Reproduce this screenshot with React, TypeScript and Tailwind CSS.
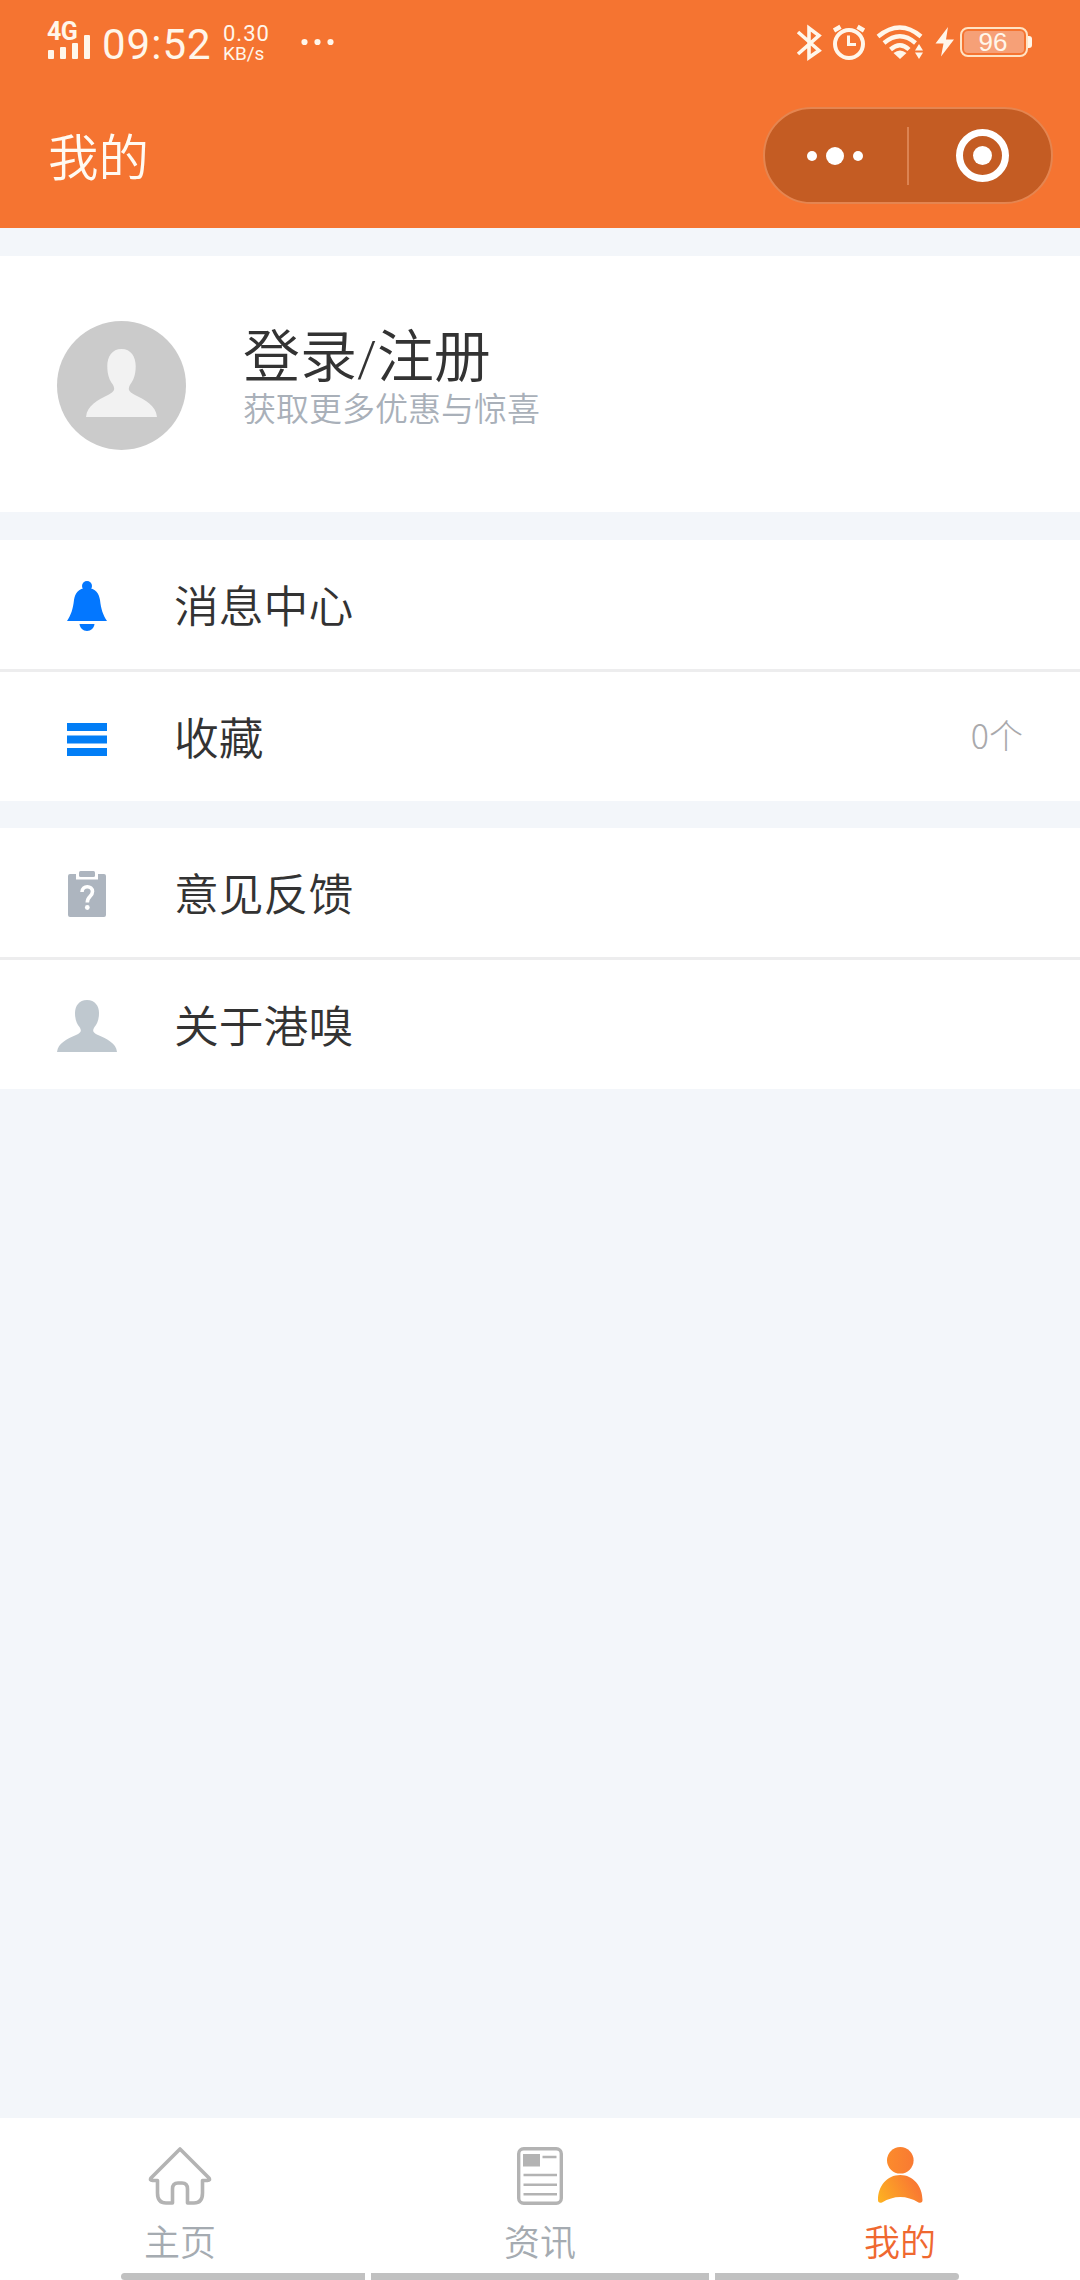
import React from "react";

interface MenuRowProps {
  icon: React.ReactNode;
  label: string;
  value?: string;
  divided?: boolean;
}

interface TabProps {
  icon: React.ReactNode;
  label: string;
  active?: boolean;
}

const StatusBar: React.FC = () => (
  <div className="flex h-[84px] items-start font-[Roboto,sans-serif] text-[#fff6ea]">
    <div className="ml-[47px] mt-[22px] w-[44px]">
      <div className="h-[20px] whitespace-nowrap text-[25px] font-bold leading-[20px] tracking-[-0.5px]">4G</div>
      <svg width="44" height="26" viewBox="0 0 44 26" fill="currentColor" className="-mt-[10px] overflow-visible">
        <rect x="1" y="18" width="6" height="9" rx="1" />
        <rect x="13" y="15" width="6" height="12" rx="1" />
        <rect x="25" y="11" width="6" height="16" rx="1" />
        <rect x="37" y="3" width="6" height="24" rx="1" />
      </svg>
    </div>
    <div className="ml-[11px] mt-[20px] w-[109px] whitespace-nowrap text-[42px] leading-[50px] tracking-[1px]">09:52</div>
    <div className="ml-[12px] mt-[22px] w-[50px]">
      <div className="h-[23px] text-[22px] leading-[23px] tracking-[1px]">0.30</div>
      <div className="h-[17px] text-[19px] leading-[17px]">KB/s</div>
    </div>
    <svg width="34" height="8" viewBox="0 0 34 8" fill="currentColor" className="ml-[27px] mt-[38px]">
      <circle cx="4.5" cy="4" r="3.1" />
      <circle cx="17.5" cy="4" r="3.1" />
      <circle cx="30.5" cy="4" r="3.1" />
    </svg>

    <svg width="28" height="38" viewBox="0 0 28 38" fill="none" stroke="currentColor" strokeWidth="3.6" className="ml-auto mt-[24px]">
      <path d="M2 8 23 26.5 13 33.5V4L23 11.5 2 30" />
    </svg>
    <svg width="36" height="38" viewBox="0 0 36 38" fill="none" stroke="currentColor" className="ml-[7px] mt-[24px]">
      <circle cx="18" cy="20" r="14" strokeWidth="4" />
      <path d="M17.5 11.5V20.5H25" strokeWidth="3" />
      <path d="M3 6.5 9.5 2.8M33 6.5 26.5 2.8" strokeWidth="4.5" />
    </svg>
    <svg width="50" height="38" viewBox="0 0 50 38" fill="none" stroke="currentColor" className="ml-[9px] mt-[24px]">
      <path d="M2 12.5Q24 -5.5 45 12.5" strokeWidth="4.4" />
      <path d="M8 19Q24 5.5 39.5 19" strokeWidth="4.4" />
      <path d="M14.5 25.5Q24 17 33 25.5" strokeWidth="4.4" />
      <path d="M17.5 29Q24 24 30.5 29L24 35Z" fill="currentColor" stroke="none" />
      <path d="M43 20 47 26.5H39ZM43 35 47 28.5H39Z" fill="currentColor" stroke="none" />
    </svg>
    <svg width="20" height="30" viewBox="0 0 20 30" fill="currentColor" className="ml-[9px] mt-[27px]">
      <path d="M13 0 .5 16.5H8.5L6 29.5 19 12.5H11Z" />
    </svg>
    <div className="ml-[5px] mt-[27px] flex h-[30px] w-[68px] rounded-[8px] border-2 border-[#ffe3c4] p-[2px]">
      <div className="flex-1 rounded-[4px] bg-[#f6a077] pr-[2px] text-center font-['Liberation_Sans',sans-serif] text-[26px] leading-[23px]">96</div>
    </div>
    <div className="mr-[48px] mt-[36px] h-[12px] w-[4px] rounded-r-[3px] bg-current" />
  </div>
);

const NavBar: React.FC = () => (
  <div className="flex h-[144px] items-start justify-between text-[#fffaf2]">
    <h1 className="ml-[48px] mt-[34px] text-[50.5px] font-[350] leading-[72px]">我的</h1>
    <div className="mr-[27px] mt-[23px] flex h-[97px] w-[290px] items-center rounded-full border-2 border-[#e58550] bg-[#c45c23]">
      <div className="flex flex-1 items-center justify-center gap-[9px] pr-[2px]">
        <span className="size-[10px] rounded-full bg-white" />
        <span className="size-[18px] rounded-full bg-white" />
        <span className="size-[10px] rounded-full bg-white" />
      </div>
      <div className="h-[58px] w-[2px] bg-[#dc8352]" />
      <div className="flex w-[142px] justify-center pl-[4px]">
        <div className="flex size-[53px] items-center justify-center rounded-full border-[7px] border-white">
          <span className="size-[19px] rounded-full bg-white" />
        </div>
      </div>
    </div>
  </div>
);

const BellIcon: React.FC = () => (
  <svg width="40" height="50" viewBox="0 0 40 50" fill="#0377ff" className="mt-[2px]">
    <circle cx="20" cy="5" r="5" />
    <path d="M20 7C11 7 8 13 7 19 6 28 4 34 0 40H40C36 34 34 28 33 19 32 13 29 7 20 7Z" />
    <path d="M12.5 43H27.5C27 47 24 50 20 50S13 47 12.5 43Z" />
  </svg>
);

const ListIcon: React.FC = () => (
  <svg width="40" height="33" viewBox="0 0 40 33" fill="#027ef6" className="mt-[5px]">
    <rect width="40" height="8" />
    <rect y="12.5" width="40" height="8" />
    <rect y="25" width="40" height="8" />
  </svg>
);

const ClipboardIcon: React.FC = () => (
  <svg width="38" height="46" viewBox="0 0 38 46" className="mt-[2px]">
    <path d="M2 3H8V8.5H30V3H36Q38 3 38 5V44Q38 46 36 46H2Q0 46 0 44V5Q0 3 2 3Z" fill="#adb5bf" />
    <rect x="11" y="0" width="16" height="6" rx="1.5" fill="#adb5bf" />
    <path d="M14 21C14 14 24.5 14 24.5 20.5 24.5 25.5 19.3 25 19.3 31.5" fill="none" stroke="#fff" strokeWidth="3.6" />
    <circle cx="19.3" cy="36.5" r="2.4" fill="#fff" />
  </svg>
);

const PersonIcon: React.FC<{ className: string }> = ({ className }) => (
  <svg viewBox="0 0 60 52" preserveAspectRatio="none" fill="currentColor" className={className}>
    <path d="M30 0C22 0 18 6 18 13 18 20 20 24 22.5 27 25 31 24 32.5 19 35 10 39 1 43 0 52H60C59 43 50 39 41 35 36 32.5 35 31 37.5 27 40 24 42 20 42 13 42 6 38 0 30 0Z" />
  </svg>
);

const HomeIcon: React.FC = () => (
  <svg width="64" height="58" viewBox="0 0 64 58" fill="none" stroke="#b3b3b3" strokeWidth="3.6" strokeLinejoin="round">
    <path d="M32 2 3 31Q1.5 33.5 4.5 33.5H9.5V46Q9.5 56 18 56H24.5V42Q24.5 36 30 36H34Q39.5 36 39.5 42V56H46Q54.5 56 54.5 46V33.5H59.5Q62.5 33.5 61 31Z" />
  </svg>
);

const NewsIcon: React.FC = () => (
  <svg width="46" height="58" viewBox="0 0 46 58" fill="none" stroke="#b3b3b3">
    <rect x="1.7" y="1.7" width="42.6" height="54.6" rx="5" strokeWidth="3.4" />
    <rect x="6" y="7" width="17" height="12.5" fill="#b3b3b3" stroke="none" />
    <path d="M25.5 10H39.5M6.5 28H40M6.5 37.7H40M6.5 47.2H40" strokeWidth="2.5" />
  </svg>
);

const MineIcon: React.FC = () => (
  <svg width="46" height="58" viewBox="0 0 46 58">
    <defs>
      <linearGradient id="mine" gradientUnits="userSpaceOnUse" x1="2" y1="52" x2="36" y2="34">
        <stop offset="0" stopColor="#fdb022" />
        <stop offset="1" stopColor="#f97a32" />
      </linearGradient>
      <linearGradient id="mineHead" x1="0" y1="0" x2="1" y2="0">
        <stop offset="0" stopColor="#fc8b2c" />
        <stop offset="1" stopColor="#f97a32" />
      </linearGradient>
    </defs>
    <circle cx="23.3" cy="13.3" r="13.3" fill="url(#mineHead)" />
    <path d="M23.3 28C10 28 1 39 1 53Q1 56.5 5 55.5 14 50 23.3 50T41.5 55.5Q45.5 56.5 45.5 53C45.5 39 36 28 23.3 28Z" fill="url(#mine)" />
  </svg>
);

const MenuRow: React.FC<MenuRowProps> = ({ icon, label, value, divided }) => (
  <>
    {divided && <div className="h-[3px] bg-[#ededee]" />}
    <div className="flex h-[129px] items-center pr-[57px]">
      <div className="ml-[57px] flex w-[60px] justify-center">{icon}</div>
      <div className="-mt-[1px] ml-[57px] flex-1 text-[44.8px] font-[350] leading-[60px] text-[#333]">{label}</div>
      {value && <div className="-mt-[5px] text-[34px] font-light text-[#a9a9ac]">{value}</div>}
    </div>
  </>
);

const Tab: React.FC<TabProps> = ({ icon, label, active }) => (
  <div className="flex flex-1 flex-col items-center pt-[29px]">
    <div className="h-[58px]">{icon}</div>
    <div className={active ? "mt-[10px] text-[36px] font-[350] leading-[50px] text-[#ef6830]" : "mt-[10px] text-[36px] font-[350] leading-[50px] text-[#a5abb1]"}>
      {label}
    </div>
  </div>
);

const App: React.FC = () => {
  return (
    <div className="flex h-[2280px] w-[1080px] flex-col overflow-hidden bg-[#f3f6fa] font-['Noto_Sans_CJK_SC',sans-serif]">
      <header className="h-[228px] bg-[#f57431]">
        <StatusBar />
        <NavBar />
      </header>

      <section className="mt-[28px] flex h-[256px] bg-white">
        <div className="ml-[57px] mt-[65px] flex size-[129px] justify-center rounded-full bg-[#cbcbcb] pt-[28px] text-[#f2f2f2]">
          <PersonIcon className="h-[68px] w-[71px]" />
        </div>
        <div className="ml-[57px] mt-[62px]">
          <div className="h-[69px] text-[57px] font-[350] leading-[69px] text-[#333]">
            登录<span className="font-[Roboto,sans-serif] text-[50px] font-light">/</span>注册
          </div>
          <div className="text-[33px] font-[350] leading-[40px] text-[#a9b0b9]">获取更多优惠与惊喜</div>
        </div>
      </section>

      <section className="mt-[28px] bg-white">
        <MenuRow icon={<BellIcon />} label="消息中心" />
        <MenuRow icon={<ListIcon />} label="收藏" value="0个" divided />
      </section>

      <section className="mt-[27px] bg-white">
        <MenuRow icon={<ClipboardIcon />} label="意见反馈" />
        <MenuRow icon={<PersonIcon className="mt-[2px] h-[52px] w-[60px] text-[#bfc8cf]" />} label="关于港嗅" divided />
      </section>

      <footer className="mt-auto flex h-[162px] flex-col justify-between bg-white">
        <nav className="flex">
          <Tab icon={<HomeIcon />} label="主页" />
          <Tab icon={<NewsIcon />} label="资讯" />
          <Tab icon={<MineIcon />} label="我的" active />
        </nav>
        <div className="flex h-[7px] justify-center gap-[6px]">
          <span className="w-[244px] rounded-l-full bg-[#c1c1c1]" />
          <span className="w-[338px] bg-[#c1c1c1]" />
          <span className="w-[244px] rounded-r-full bg-[#c1c1c1]" />
        </div>
      </footer>
    </div>
  );
};

export default App;
